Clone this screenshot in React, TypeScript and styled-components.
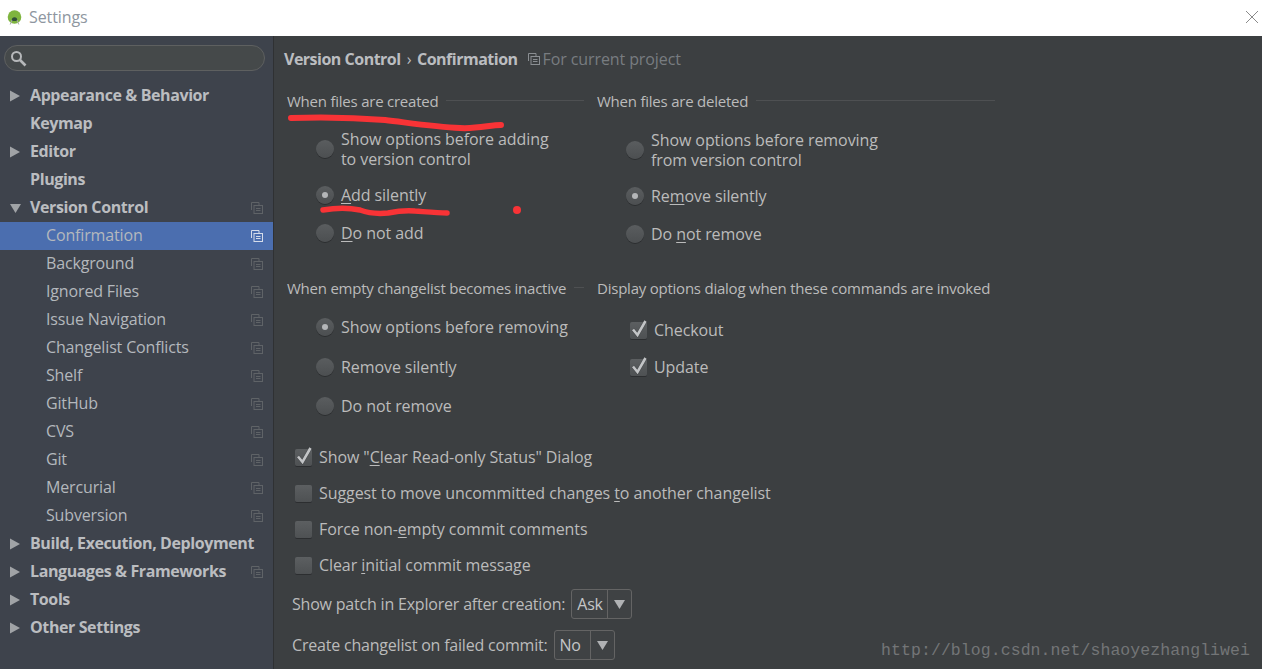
import React from 'react'
import styled, { createGlobalStyle } from 'styled-components'

const GlobalStyle = createGlobalStyle`
  html, body {
    margin: 0;
    padding: 0;
    height: 100%;
    background: #3c3f41;
  }
  #root { height: 100%; }
  * { box-sizing: border-box; }
`

const Window = styled.div`
  position: relative;
  width: 1262px;
  height: 669px;
  overflow: hidden;
  display: flex;
  flex-direction: column;
  font-family: "Open Sans", "Noto Sans", sans-serif;
  font-size: 16px;
  color: #bbbbbb;
`

const TitleBar = styled.div`
  height: 36px;
  flex: none;
  background: #ffffff;
  display: flex;
  align-items: center;
  padding: 0 3px 2px 7px;
  color: #8e96a0;
`

const TitleText = styled.span`
  margin-left: 7px;
  flex: 1;
  letter-spacing: -0.1px;
`

const Body = styled.div`
  flex: 1;
  display: flex;
  min-height: 0;
`

const Sidebar = styled.div`
  width: 274px;
  flex: none;
  background: #3e434c;
  border-right: 1px solid #2f3133;
  padding: 9px 0 0;
`

const SearchBox = styled.div`
  width: 261px;
  height: 26px;
  margin: 0 0 11px 4px;
  background: #45494a;
  border: 1px solid #5e6060;
  border-radius: 13px;
  display: flex;
  align-items: center;
  padding-left: 5px;
`

const TreeRow = styled.div<{ $selected?: boolean }>`
  height: 28px;
  display: flex;
  align-items: center;
  background: ${p => (p.$selected ? '#4b6eaf' : 'transparent')};
  padding-right: 10px;
`

const ArrowSlot = styled.div`
  width: 30px;
  flex: none;
  padding-left: 10px;
  display: flex;
  align-items: center;
`

const TreeLabel = styled.span<{ $child?: boolean }>`
  flex: 1;
  margin-left: ${p => (p.$child ? '16px' : '0')};
  margin-top: -2px;
  font-weight: ${p => (p.$child ? 400 : 700)};
  color: ${p => (p.$child ? '#b4b8bd' : '#bbbdc0')};
  white-space: nowrap;
  letter-spacing: ${p => (p.$child ? '-0.15px' : '-0.4px')};
`

const Main = styled.div`
  flex: 1;
  background: #3c3f41;
  padding: 12px 0 0 13px;
  min-width: 0;
`

const Breadcrumb = styled.div`
  height: 22px;
  display: flex;
  align-items: center;
  margin-left: -3px;
  font-weight: 700;
  color: #bbbdc0;
  letter-spacing: -0.5px;
  white-space: nowrap;
`

const CrumbSep = styled.span`
  font-weight: 400;
  margin: 0 6px;
`

const ProjectNote = styled.span`
  display: inline-flex;
  align-items: center;
  gap: 3px;
  margin-left: 10px;
  font-weight: 400;
  color: #787c80;
  letter-spacing: -0.1px;
`

const Columns = styled.div<{ $top: number; $height: number }>`
  display: grid;
  grid-template-columns: 297px 398px;
  column-gap: 13px;
  margin-top: ${p => p.$top}px;
  height: ${p => p.$height}px;
`

const GroupTitle = styled.div`
  height: 20px;
  display: flex;
  align-items: center;
  gap: 8px;
  white-space: nowrap;
  font-size: 15px;
  letter-spacing: -0.23px;
  &::after {
    content: '';
    flex: 1;
    height: 1px;
    margin-top: -2px;
    background: #4e5052;
  }
`

const OptionList = styled.div<{ $top: number; $gap: number; $lastExtra?: number }>`
  display: flex;
  flex-direction: column;
  gap: ${p => p.$gap}px;
  margin-top: ${p => p.$top}px;
  padding-left: 28px;
  & > :last-child {
    margin-top: ${p => p.$lastExtra ?? 0}px;
  }
`

const RadioRow = styled.div`
  display: flex;
  align-items: center;
  gap: 7px;
  min-height: 20px;
  line-height: 20px;
  letter-spacing: -0.08px;
`

const RadioDot = styled.div<{ $on?: boolean }>`
  width: 18px;
  height: 18px;
  flex: none;
  margin-left: 1px;
  border-radius: 50%;
  background: linear-gradient(#5a5d5f, #4c4f51);
  box-shadow: 0 1px 0 #2c2e30;
  display: flex;
  align-items: center;
  justify-content: center;
  &::after {
    content: '';
    display: ${p => (p.$on ? 'block' : 'none')};
    width: 6px;
    height: 6px;
    border-radius: 50%;
    background: #b4b6b8;
  }
`

const CheckRow = styled.div`
  display: flex;
  align-items: center;
  gap: 7px;
  height: 20px;
  white-space: nowrap;
  letter-spacing: -0.08px;
`

const CheckBox = styled.div`
  position: relative;
  width: 17px;
  height: 17px;
  flex: none;
  border-radius: 2px;
  background: linear-gradient(#5c5f61, #4e5153);
  box-shadow: 0 1px 0 #2c2e30;
`

const CheckMark = styled.svg`
  position: absolute;
  left: 0;
  top: -3px;
`

const CheckStack = styled.div<{ $indent: number; $top: number; $gap: number }>`
  display: flex;
  flex-direction: column;
  gap: ${p => p.$gap}px;
  margin-top: ${p => p.$top}px;
  padding-left: ${p => p.$indent}px;
`

const ComboRow = styled.div<{ $top: number }>`
  display: flex;
  align-items: center;
  margin-top: ${p => p.$top}px;
  margin-left: 5px;
  gap: 6px;
  height: 30px;
  white-space: nowrap;
  letter-spacing: -0.2px;
`

const Combo = styled.div`
  height: 30px;
  display: flex;
  align-items: stretch;
  border: 1px solid #646464;
  border-radius: 3px;
  background: #3f4244;
  color: #c4c6c8;
`

const ComboValue = styled.div`
  width: 36px;
  padding-left: 5px;
  display: flex;
  align-items: center;
  border-right: 1px solid #646464;
`

const ComboArrow = styled.div`
  width: 23px;
  display: flex;
  align-items: center;
  justify-content: center;
`

const Key = styled.span`
  text-decoration: underline;
  text-underline-offset: 2px;
`

const Watermark = styled.div`
  position: absolute;
  right: 12px;
  bottom: 9px;
  font-family: "Liberation Mono", monospace;
  font-size: 16.5px;
  letter-spacing: 0.07px;
  color: #737577;
  white-space: nowrap;
`

const Scribbles = styled.svg`
  position: absolute;
  left: 0;
  top: 0;
  pointer-events: none;
`

const Arrow = ({ open }: { open?: boolean }) => (
  <svg width="12" height="12" viewBox="0 0 12 12">
    <path d={open ? 'M0 2h11L5.5 11z' : 'M0 .5v11L10 6z'} fill="#a0a3a6" />
  </svg>
)

const CopyIcon = ({ color = '#5f6367' }: { color?: string }) => (
  <svg width="12" height="12" viewBox="0 0 12 12" fill="none" stroke={color} strokeWidth="1" style={{ flex: 'none' }}>
    <path d="M.5 8V.5H8V3" />
    <rect x="3" y="3.5" width="8.5" height="8" />
    <path d="M5 6.5h4.5M5 8.5h4.5" />
  </svg>
)

const Tick = () => (
  <CheckMark width="18" height="20" viewBox="0 0 18 20">
    <path d="M3 10.5l4.5 5.5 8-14" fill="none" stroke="#2f3133" strokeWidth="3.4" opacity="0.55" />
    <path d="M3 10.5l4.5 5.5 8-14" fill="none" stroke="#c2c4c6" strokeWidth="2.6" />
  </CheckMark>
)

const Caret = () => (
  <svg width="11" height="9" viewBox="0 0 11 9">
    <path d="M0 0h11L5.5 9z" fill="#b0b2b4" />
  </svg>
)

type TreeItem = { label: string; arrow?: 'open' | 'closed'; child?: boolean; copy?: boolean; selected?: boolean }

const tree: TreeItem[] = [
  { label: 'Appearance & Behavior', arrow: 'closed' },
  { label: 'Keymap' },
  { label: 'Editor', arrow: 'closed' },
  { label: 'Plugins' },
  { label: 'Version Control', arrow: 'open', copy: true },
  { label: 'Confirmation', child: true, copy: true, selected: true },
  { label: 'Background', child: true, copy: true },
  { label: 'Ignored Files', child: true, copy: true },
  { label: 'Issue Navigation', child: true, copy: true },
  { label: 'Changelist Conflicts', child: true, copy: true },
  { label: 'Shelf', child: true, copy: true },
  { label: 'GitHub', child: true, copy: true },
  { label: 'CVS', child: true, copy: true },
  { label: 'Git', child: true, copy: true },
  { label: 'Mercurial', child: true, copy: true },
  { label: 'Subversion', child: true, copy: true },
  { label: 'Build, Execution, Deployment', arrow: 'closed' },
  { label: 'Languages & Frameworks', arrow: 'closed', copy: true },
  { label: 'Tools', arrow: 'closed' },
  { label: 'Other Settings', arrow: 'closed' },
]

function App() {
  return (
    <>
      <GlobalStyle />
      <Window>
        <TitleBar>
          <svg width="15" height="15" viewBox="0 0 15 15">
            <circle cx="7.5" cy="7" r="6.8" fill="#7fb53f" />
            <path d="M4.8 10a2.7 2.7 0 0 1 5.4 0v1H4.8z" fill="#31503a" />
            <path d="M5 10l-1.8 4.5M10 10l1.8 4.5" stroke="#a8aeaa" strokeWidth="1" />
          </svg>
          <TitleText>Settings</TitleText>
          <svg width="14" height="14" viewBox="0 0 14 14">
            <path d="M1 1l12 12M13 1L1 13" stroke="#8a8a8a" strokeWidth="1" />
          </svg>
        </TitleBar>
        <Body>
          <Sidebar>
            <SearchBox>
              <svg width="17" height="17" viewBox="0 0 17 17" fill="none" stroke="#b6b8ba" strokeWidth="2">
                <circle cx="6.5" cy="6.5" r="4.5" />
                <path d="M10 10l5.5 5.5" strokeWidth="2.6" />
              </svg>
            </SearchBox>
            {tree.map(item => (
              <TreeRow key={item.label} $selected={item.selected}>
                <ArrowSlot>{item.arrow && <Arrow open={item.arrow === 'open'} />}</ArrowSlot>
                <TreeLabel $child={item.child}>{item.label}</TreeLabel>
                {item.copy && <CopyIcon color={item.selected ? '#d5dcea' : '#5f6367'} />}
              </TreeRow>
            ))}
          </Sidebar>
          <Main>
            <Breadcrumb>
              Version Control<CrumbSep>›</CrumbSep>Confirmation
              <ProjectNote>
                <CopyIcon color="#8a8e92" />
                For current project
              </ProjectNote>
            </Breadcrumb>
            <Columns $top={21} $height={172}>
              <div>
                <GroupTitle>When files are created</GroupTitle>
                <OptionList $top={18} $gap={16} $lastExtra={2}>
                  <RadioRow>
                    <RadioDot />
                    <span>Show options before adding<br />to version control</span>
                  </RadioRow>
                  <RadioRow>
                    <RadioDot $on />
                    <span><Key>A</Key>dd silently</span>
                  </RadioRow>
                  <RadioRow>
                    <RadioDot />
                    <span><Key>D</Key>o not add</span>
                  </RadioRow>
                </OptionList>
              </div>
              <div>
                <GroupTitle>When files are deleted</GroupTitle>
                <OptionList $top={19} $gap={16} $lastExtra={2}>
                  <RadioRow>
                    <RadioDot />
                    <span>Show options before removing<br />from version control</span>
                  </RadioRow>
                  <RadioRow>
                    <RadioDot $on />
                    <span>Re<Key>m</Key>ove silently</span>
                  </RadioRow>
                  <RadioRow>
                    <RadioDot />
                    <span>Do <Key>n</Key>ot remove</span>
                  </RadioRow>
                </OptionList>
              </div>
            </Columns>
            <Columns $top={15} $height={169}>
              <div>
                <GroupTitle>When empty changelist becomes inactive</GroupTitle>
                <OptionList $top={19} $gap={19.5}>
                  <RadioRow>
                    <RadioDot $on />
                    <span>Show options before removing</span>
                  </RadioRow>
                  <RadioRow>
                    <RadioDot />
                    <span>Remove silently</span>
                  </RadioRow>
                  <RadioRow>
                    <RadioDot />
                    <span>Do not remove</span>
                  </RadioRow>
                </OptionList>
              </div>
              <div>
                <GroupTitle>Display options dialog when these commands are invoked</GroupTitle>
                <CheckStack $indent={33} $top={22} $gap={17}>
                  <CheckRow>
                    <CheckBox><Tick /></CheckBox>
                    Checkout
                  </CheckRow>
                  <CheckRow>
                    <CheckBox><Tick /></CheckBox>
                    Update
                  </CheckRow>
                </CheckStack>
              </div>
            </Columns>
            <CheckStack $indent={8} $top={0} $gap={16}>
              <CheckRow>
                <CheckBox><Tick /></CheckBox>
                <span>Show "<Key>C</Key>lear Read-only Status" Dialog</span>
              </CheckRow>
              <CheckRow>
                <CheckBox />
                <span>Suggest to move uncommitted changes <Key>t</Key>o another changelist</span>
              </CheckRow>
              <CheckRow>
                <CheckBox />
                <span>Force non-<Key>e</Key>mpty commit comments</span>
              </CheckRow>
              <CheckRow>
                <CheckBox />
                <span>Clear <Key>i</Key>nitial commit message</span>
              </CheckRow>
            </CheckStack>
            <ComboRow $top={14}>
              Show patch in Explorer after creation:
              <Combo>
                <ComboValue>Ask</ComboValue>
                <ComboArrow><Caret /></ComboArrow>
              </Combo>
            </ComboRow>
            <ComboRow $top={11}>
              Create changelist on failed commit:
              <Combo>
                <ComboValue>No</ComboValue>
                <ComboArrow><Caret /></ComboArrow>
              </Combo>
            </ComboRow>
          </Main>
        </Body>
        <Scribbles width="1262" height="669" viewBox="0 0 1262 669">
          <path
            d="M291 118C320 117 360 118 385 120C410 123 435 127 460 128C478 129 490 125 501 125"
            fill="none"
            stroke="#f83336"
            strokeWidth="6"
            strokeLinecap="round"
          />
          <path
            d="M323 210C335 208 350 208 360 210C368 213 378 214 388 213C398 211 405 210 415 211C428 212 438 213 447 213"
            fill="none"
            stroke="#f83336"
            strokeWidth="5.5"
            strokeLinecap="round"
          />
          <circle cx="517" cy="210" r="4" fill="#f83336" />
        </Scribbles>
        <Watermark>http://blog.csdn.net/shaoyezhangliwei</Watermark>
      </Window>
    </>
  )
}

export default App
